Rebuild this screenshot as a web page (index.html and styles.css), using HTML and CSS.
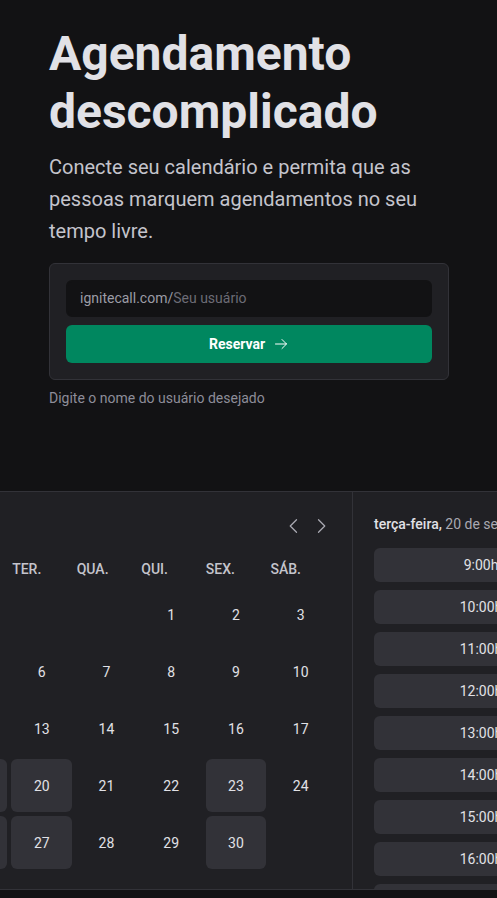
FILE: index.html
```html
<!DOCTYPE html>
<html lang="pt-BR">
<head>
<meta charset="utf-8">
<title>Ignite Call</title>
<link rel="stylesheet" href="styles.css">
</head>
<body>
<main class="page">
  <section class="hero">
    <h1 class="title">Agendamento descomplicado</h1>
    <p class="lead">Conecte seu calendário e permita que as pessoas marquem agendamentos no seu tempo livre.</p>
    <form class="claim">
      <label class="field">
        <span class="prefix">ignitecall.com/</span>
        <input class="field-input" type="text" placeholder="Seu usuário">
      </label>
      <button class="btn" type="button">Reservar
        <svg class="btn-icon" viewBox="0 0 256 256" width="16" height="16" fill="none" stroke="currentColor" stroke-width="16" stroke-linecap="round" stroke-linejoin="round"><line x1="40" y1="128" x2="216" y2="128"/><polyline points="144 56 216 128 144 200"/></svg>
      </button>
    </form>
    <p class="hint">Digite o nome do usuário desejado</p>
  </section>

  <section class="preview">
    <div class="calendar">
      <div class="cal-header">
        <p class="cal-title">Setembro <span>2022</span></p>
        <div class="cal-actions">
          <button class="nav" type="button" aria-label="Mês anterior"><svg viewBox="0 0 256 256" width="20" height="20" fill="none" stroke="currentColor" stroke-width="16" stroke-linecap="round" stroke-linejoin="round"><polyline points="160 208 80 128 160 48"/></svg></button>
          <button class="nav" type="button" aria-label="Próximo mês"><svg viewBox="0 0 256 256" width="20" height="20" fill="none" stroke="currentColor" stroke-width="16" stroke-linecap="round" stroke-linejoin="round"><polyline points="96 48 176 128 96 208"/></svg></button>
        </div>
      </div>
      <div class="weekdays">
        <span>DOM.</span><span>SEG.</span><span>TER.</span><span>QUA.</span><span>QUI.</span><span>SEX.</span><span>SÁB.</span>
      </div>
      <div class="days">
        <span class="day"></span><span class="day"></span><span class="day"></span><span class="day"></span>
        <span class="day">1</span><span class="day">2</span><span class="day">3</span>
        <span class="day">4</span><span class="day">5</span><span class="day">6</span><span class="day">7</span><span class="day">8</span><span class="day">9</span><span class="day">10</span>
        <span class="day">11</span><span class="day">12</span><span class="day">13</span><span class="day">14</span><span class="day">15</span><span class="day">16</span><span class="day">17</span>
        <span class="day">18</span><span class="day on">19</span><span class="day on">20</span><span class="day">21</span><span class="day">22</span><span class="day on">23</span><span class="day">24</span>
        <span class="day">25</span><span class="day on">26</span><span class="day on">27</span><span class="day">28</span><span class="day">29</span><span class="day on">30</span><span class="day"></span>
      </div>
    </div>
    <div class="times">
      <p class="times-head">terça-feira, <span>20 de setembro</span></p>
      <div class="times-list">
        <span class="slot">9:00h</span>
        <span class="slot">10:00h</span>
        <span class="slot">11:00h</span>
        <span class="slot">12:00h</span>
        <span class="slot">13:00h</span>
        <span class="slot">14:00h</span>
        <span class="slot">15:00h</span>
        <span class="slot">16:00h</span>
        <span class="slot">17:00h</span>
        <span class="slot">18:00h</span>
      </div>
    </div>
  </section>
</main>
</body>
</html>
```
FILE: styles.css
```css
* { box-sizing: border-box; }

html, body {
  margin: 0;
  height: 100%;
  overflow: hidden;
}

body {
  background: #121214;
  color: #E1E1E6;
  font-family: Roboto, "Liberation Sans", Arial, sans-serif;
  -webkit-font-smoothing: antialiased;
}

.page {
  display: flex;
  flex-direction: column;
  gap: 81px;
}

.hero {
  width: 449px;
  padding: 25px 0 0 49px;
}

.title {
  margin: 0;
  font-size: 48px;
  line-height: 1.2;
  font-weight: 700;
  color: #E1E1E6;
}

.lead {
  margin: 11px 0 0;
  font-size: 20px;
  line-height: 32px;
  color: #C4C4CC;
}

.claim {
  margin: 16px 0 0;
  display: flex;
  flex-direction: column;
  gap: 8px;
  padding: 16px;
  background: #202024;
  border: 1px solid #323238;
  border-radius: 6px;
}

.field {
  display: flex;
  align-items: baseline;
  height: 37px;
  padding: 8px 12px;
  background: #121214;
  border: 2px solid #121214;
  border-radius: 6px;
  font-size: 14px;
  line-height: 17px;
}

.prefix {
  color: #9C9CA6;
}

.field-input {
  flex: 1;
  min-width: 0;
  padding: 0;
  border: 0;
  background: transparent;
  color: #E1E1E6;
  font: inherit;
  outline: none;
}

.field-input::placeholder {
  color: #6C6C76;
  opacity: 1;
}

.btn {
  display: flex;
  align-items: center;
  justify-content: center;
  gap: 8px;
  height: 38px;
  padding: 0 16px;
  border: 0;
  border-radius: 6px;
  background: #00875F;
  color: #FFFFFF;
  font-family: inherit;
  font-size: 14px;
  font-weight: 700;
}

.btn-icon { display: block; }

.hint {
  margin: 7px 0 0;
  font-size: 14px;
  line-height: 22.4px;
  color: #8D8D99;
}

/* preview */
.preview {
  display: grid;
  grid-template-columns: 491px 257px;
  width: 750px;
  height: 399px;
  margin-left: -140px;
  background: #202024;
  border: 1px solid #323238;
  border-radius: 6px;
}

.calendar {
  padding: 24px 21px 20px;
  overflow: hidden;
}

.cal-header {
  display: flex;
  align-items: center;
  justify-content: space-between;
  height: 20px;
  margin-bottom: 23px;
}

.cal-title {
  margin: 0;
  font-size: 16px;
  font-weight: 500;
  color: #E1E1E6;
}

.cal-title span { color: #8D8D99; }

.cal-actions {
  display: flex;
  gap: 7px;
}

.nav {
  display: block;
  padding: 0;
  border: 0;
  background: none;
  color: #A9A9B2;
  width: 20px;
  height: 20px;
}

.nav svg { display: block; }

.weekdays {
  display: grid;
  grid-template-columns: repeat(7, 1fr);
  column-gap: 4px;
  height: 20px;
  margin-bottom: 10px;
  font-size: 14px;
  line-height: 20px;
  font-weight: 500;
  color: #C4C4CC;
  padding-left: 1px;
}

.days {
  display: grid;
  grid-template-columns: repeat(7, 1fr);
  grid-auto-rows: 52.9px;
  gap: 4px;
}

.day {
  display: flex;
  align-items: center;
  justify-content: center;
  border-radius: 6px;
  font-size: 14px;
  color: #E1E1E6;
}

.day.on { background: #323238; }

.times {
  border-left: 1px solid #323238;
  padding: 24px 21px 0;
  overflow: hidden;
}

.times-head {
  margin: 0 0 16px;
  font-size: 14px;
  line-height: 16px;
  font-weight: 500;
  color: #E1E1E6;
  white-space: nowrap;
}

.times-head span {
  font-weight: 400;
  color: #A9A9B2;
}

.times-list {
  display: flex;
  flex-direction: column;
  gap: 8px;
}

.slot {
  height: 34px;
  line-height: 34px;
  text-align: center;
  background: #323238;
  border-radius: 6px;
  font-size: 14px;
  color: #E1E1E6;
}
```
